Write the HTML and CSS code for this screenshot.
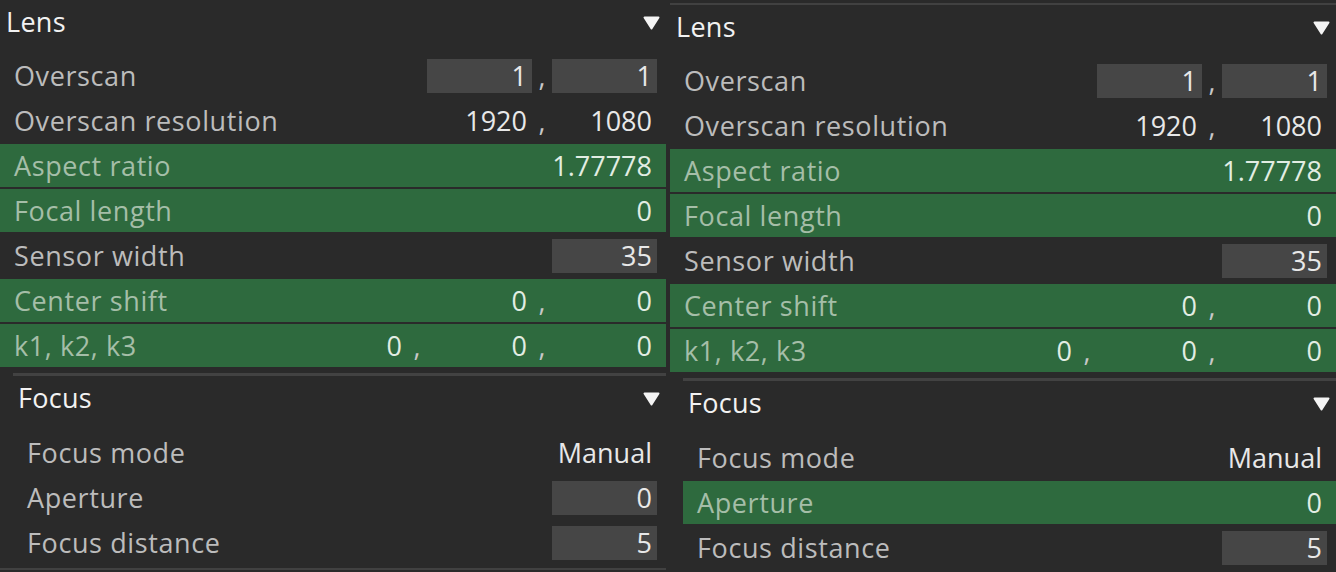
FILE: index.html
```html
<!DOCTYPE html>
<html>
<head>
<meta charset="utf-8">
<link rel="stylesheet" href="styles.css">
</head>
<body>
<div class="stage">
  <section class="panel panel-a">
    <div class="sec-head"><span class="sec-title">Lens</span><svg class="caret" width="17" height="14" viewBox="0 0 17 14"><path d="M1.5 1.5 H15.5 L8.5 12.5 Z" fill="#f4f4f4" stroke="#f4f4f4" stroke-width="2" stroke-linejoin="round"/></svg></div>
    <div class="rows">
      <div class="row"><span class="label">Overscan</span><div class="vals"><span class="field box">1</span><span class="sep">,</span><span class="field box">1</span></div></div>
      <div class="row"><span class="label">Overscan resolution</span><div class="vals"><span class="field">1920</span><span class="sep">,</span><span class="field">1080</span></div></div>
      <div class="row hl"><span class="label">Aspect ratio</span><div class="vals"><span class="field">1.77778</span></div></div>
      <div class="row hl"><span class="label">Focal length</span><div class="vals"><span class="field">0</span></div></div>
      <div class="row"><span class="label">Sensor width</span><div class="vals"><span class="field box">35</span></div></div>
      <div class="row hl"><span class="label">Center shift</span><div class="vals"><span class="field">0</span><span class="sep">,</span><span class="field">0</span></div></div>
      <div class="row hl"><span class="label">k1, k2, k3</span><div class="vals"><span class="field">0</span><span class="sep">,</span><span class="field">0</span><span class="sep">,</span><span class="field">0</span></div></div>
    </div>
    <div class="subsec">
      <div class="sec-head"><span class="sec-title">Focus</span><svg class="caret" width="17" height="14" viewBox="0 0 17 14"><path d="M1.5 1.5 H15.5 L8.5 12.5 Z" fill="#f4f4f4" stroke="#f4f4f4" stroke-width="2" stroke-linejoin="round"/></svg></div>
      <div class="rows">
        <div class="row"><span class="label">Focus mode</span><div class="vals"><span class="field">Manual</span></div></div>
        <div class="row"><span class="label">Aperture</span><div class="vals"><span class="field box">0</span></div></div>
        <div class="row"><span class="label">Focus distance</span><div class="vals"><span class="field box">5</span></div></div>
      </div>
    </div>
  </section>
  <section class="panel panel-b">
    <div class="sec-head"><span class="sec-title">Lens</span><svg class="caret" width="17" height="14" viewBox="0 0 17 14"><path d="M1.5 1.5 H15.5 L8.5 12.5 Z" fill="#f4f4f4" stroke="#f4f4f4" stroke-width="2" stroke-linejoin="round"/></svg></div>
    <div class="rows">
      <div class="row"><span class="label">Overscan</span><div class="vals"><span class="field box">1</span><span class="sep">,</span><span class="field box">1</span></div></div>
      <div class="row"><span class="label">Overscan resolution</span><div class="vals"><span class="field">1920</span><span class="sep">,</span><span class="field">1080</span></div></div>
      <div class="row hl"><span class="label">Aspect ratio</span><div class="vals"><span class="field">1.77778</span></div></div>
      <div class="row hl"><span class="label">Focal length</span><div class="vals"><span class="field">0</span></div></div>
      <div class="row"><span class="label">Sensor width</span><div class="vals"><span class="field box">35</span></div></div>
      <div class="row hl"><span class="label">Center shift</span><div class="vals"><span class="field">0</span><span class="sep">,</span><span class="field">0</span></div></div>
      <div class="row hl"><span class="label">k1, k2, k3</span><div class="vals"><span class="field">0</span><span class="sep">,</span><span class="field">0</span><span class="sep">,</span><span class="field">0</span></div></div>
    </div>
    <div class="subsec">
      <div class="sec-head"><span class="sec-title">Focus</span><svg class="caret" width="17" height="14" viewBox="0 0 17 14"><path d="M1.5 1.5 H15.5 L8.5 12.5 Z" fill="#f4f4f4" stroke="#f4f4f4" stroke-width="2" stroke-linejoin="round"/></svg></div>
      <div class="rows">
        <div class="row"><span class="label">Focus mode</span><div class="vals"><span class="field">Manual</span></div></div>
        <div class="row hl"><span class="label">Aperture</span><div class="vals"><span class="field">0</span></div></div>
        <div class="row"><span class="label">Focus distance</span><div class="vals"><span class="field box">5</span></div></div>
      </div>
    </div>
  </section>
</div>
</body>
</html>
```

FILE: styles.css
```css
html, body {
  margin: 0;
  padding: 0;
  background: #2a2a2a;
  height: 572px;
  overflow: hidden;
}
body {
  font-family: "Open Sans", "Noto Sans", sans-serif;
  font-size: 27px;
  color: #c2c2c2;
}
.stage {
  display: flex;
  align-items: flex-start;
  gap: 4px;
}
.panel {
  width: 666px;
  flex: none;
  border-top: 2px solid #414141;
  border-bottom: 2px solid #414141;
  padding-bottom: 4px;
}
.panel-a { margin-top: -2px; }
.panel-b { margin-top: 3px; }
.sec-head {
  height: 44px;
  margin-bottom: 10px;
  display: flex;
  align-items: center;
  justify-content: space-between;
  padding: 0 6px 0 6px;
}
.sec-title {
  color: #f2f2f2;
  line-height: 44px;
  letter-spacing: 0.3px;
}
.caret {
  display: block;
  margin-top: 2px;
}
.rows {
  display: flex;
  flex-direction: column;
  gap: 2px;
}
.row {
  height: 43px;
  display: flex;
  align-items: center;
  justify-content: space-between;
  padding: 0 9px 0 14px;
  line-height: 43px;
}
.row.hl {
  background: #2e6a3e;
}
.label {
  color: #bcbcbc;
  white-space: nowrap;
  letter-spacing: 0.6px;
}
.row.hl .label {
  color: #a5bea8;
}
.vals {
  display: flex;
  align-items: center;
}
.field {
  min-width: 105px;
  height: 34px;
  line-height: 34px;
  padding-right: 5px;
  box-sizing: border-box;
  text-align: right;
  color: #e8e8e8;
  white-space: nowrap;
}
.row.hl .field {
  color: #e2ede3;
}
.field.box {
  background: #464646;
}
.sep {
  width: 20px;
  text-align: center;
  color: #c8c8c8;
  line-height: 34px;
}
.subsec {
  margin: 6px 0 0 13px;
  border-top: 3px solid #424242;
}
.subsec .sec-head {
  padding-left: 5px;
  margin-bottom: 11px;
}
```
